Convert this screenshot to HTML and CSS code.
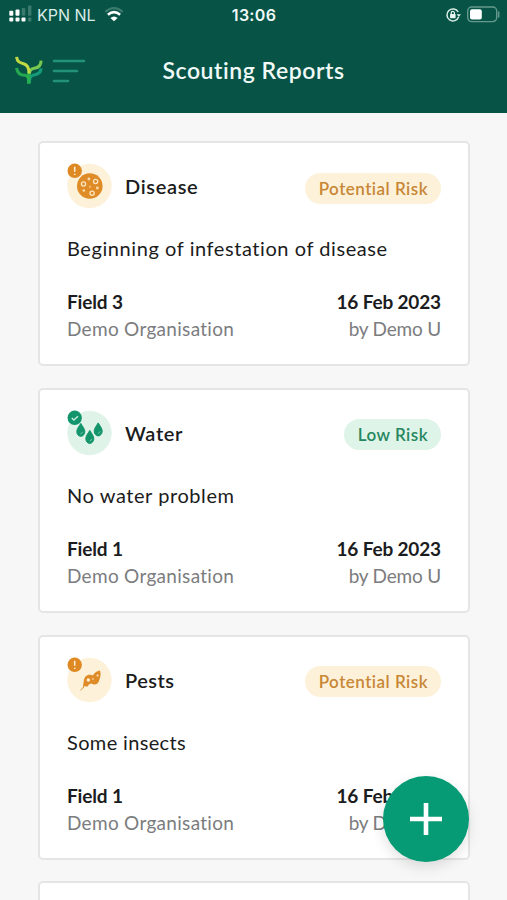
FILE: index.html
```html
<!DOCTYPE html>
<html lang="en">
<head>
<meta charset="utf-8">
<meta name="viewport" content="width=device-width, initial-scale=1">
<title>Scouting Reports</title>
<link rel="stylesheet" href="styles.css">
</head>
<body>
<header class="header">
  <div class="status">
    <div class="carrier">
      <svg class="signal" width="24" height="18" viewBox="0 0 24 18">
        <g fill="#fff"><rect x="0.3" y="5.8" width="4" height="5" rx="1"/><rect x="6.5" y="4.5" width="4" height="6.3" rx="1"/><rect x="0.3" y="12.6" width="4" height="4" rx="1"/><rect x="6.5" y="12.6" width="4" height="4" rx="1"/><rect x="12.5" y="12.6" width="4" height="4" rx="1"/></g>
        <g fill="#3b7a6d"><rect x="12.7" y="3" width="3.6" height="7.8" rx="1"/><rect x="19" y="0.5" width="3.4" height="10.3" rx="1"/><rect x="19" y="12.6" width="3.4" height="4" rx="1"/></g>
      </svg>
      <span class="carrier-name">KPN NL</span>
      <svg class="wifi" width="20" height="15" viewBox="0 0 20 15" fill="none">
        <path d="M1.3 4.8Q10-2.4 18.7 4.8" stroke="#3b7a6d" stroke-width="2.2"/>
        <path d="M3.9 7.8Q10 2.6 16.1 7.8" stroke="#fff" stroke-width="2.6"/>
        <path d="M6.4 10.9Q10 7.9 13.6 10.9L10 14.2Z" fill="#fff"/>
      </svg>
    </div>
    <span class="clock">13:06</span>
    <div class="power">
      <svg width="16" height="16" viewBox="0 0 16 16" fill="none">
        <path d="M13.6 10A6 6 0 1 1 13.2 5" stroke="#d8eee7" stroke-width="1.5"/>
        <path d="M11.6 7.2H16L13.8 10Z" fill="#d8eee7"/>
        <rect x="5" y="7" width="5.6" height="4.2" rx=".6" fill="#e8f6f2"/>
        <path d="M6.2 7V6a1.6 1.6 0 0 1 3.2 0V7" stroke="#e8f6f2" stroke-width="1.2"/>
      </svg>
      <svg width="34" height="18" viewBox="0 0 34 18" fill="none">
        <rect x="1.7" y="1" width="29" height="14.6" rx="4" stroke="#65998d" stroke-width="1.4"/>
        <rect x="4" y="3.2" width="11.8" height="10.2" rx="2" fill="#fff"/>
        <path d="M32.7 6v5" stroke="#65998d" stroke-width="1.4" stroke-linecap="round"/>
      </svg>
    </div>
  </div>
  <div class="navbar">
    <div class="nav-left">
      <svg width="28" height="29" viewBox="0 0 28 29" fill="none" stroke-width="3" stroke-linecap="butt" stroke-linejoin="round">
        <path d="M1.6 11.8C2.2 17.3 6 19.3 10 19.3C12.8 19.4 13.8 22 13.8 27" stroke="#25a950"/>
        <path d="M14.2 27C14.3 21 16 19.2 19 18.9C23 18.5 25.8 17 26.1 12.4" stroke="#159b78"/>
        <path d="M13.8 27.8V16" stroke="#25af50" stroke-width="3.4"/>
        <path d="M26.1 4.6C26 10.2 23 11.8 19.3 12.2C16.2 12.6 14.5 14.6 14.3 18" stroke="#78c850"/>
        <path d="M1.6 .8C2 6 5.2 6.8 8.6 7.7C12.5 8.8 14 11.8 14 17" stroke="#c1d944"/>
      </svg>
      <svg width="34" height="26" viewBox="0 0 34 26" fill="none" stroke="#22927a" stroke-width="2.6" stroke-linecap="round">
        <path d="M2 3H32M2 13H25M2 23H16"/>
      </svg>
    </div>
    <h1 class="title">Scouting Reports</h1>
  </div>
</header>

<main class="reports">
  <article class="card">
    <div class="card-head">
      <svg class="icon" width="46" height="46" viewBox="0 0 46 46">
        <circle cx="23.5" cy="23" r="22.2" fill="#fdf1d9"/>
        <circle cx="23.8" cy="23" r="12.8" fill="#df8b27"/>
        <g fill="none" stroke="#fbe6c3" stroke-width="1.3"><circle cx="17.5" cy="21" r="2.1"/><circle cx="29.6" cy="18.5" r="2.1"/><circle cx="26.1" cy="30.3" r="2.1"/></g>
        <g fill="#f9dcae"><circle cx="22.9" cy="16" r="1.4"/><circle cx="31.4" cy="25" r="1.4"/><circle cx="17.8" cy="27.5" r="1.3"/></g>
        <circle cx="24" cy="23.8" r="1.3" fill="#f5b25d"/>
        <circle cx="8.7" cy="7.8" r="7.2" fill="#df8925"/>
        <path d="M8.7 3.8V8.7M8.7 10.7V12" stroke="#fff2d9" stroke-width="1.5"/>
      </svg>
      <h2 class="kind">Disease</h2>
      <span class="risk risk-potential">Potential Risk</span>
    </div>
    <p class="summary summary-disease">Beginning of infestation of disease</p>
    <div class="meta"><strong class="field">Field 3</strong><strong class="date">16 Feb 2023</strong></div>
    <div class="meta meta-muted"><span class="org">Demo Organisation</span><span class="author">by Demo U</span></div>
  </article>

  <article class="card">
    <div class="card-head">
      <svg class="icon" width="46" height="46" viewBox="0 0 46 46">
        <circle cx="23.5" cy="23" r="22.2" fill="#e0f3e9"/>
        <g transform="translate(-1 -.6)">
          <g fill="#13946b" stroke="#13946b" stroke-width="1" stroke-linejoin="round">
            <path d="M15.8 14C17.8 17.4 19.8 19.5 19.8 22.2A3.9 4.6 0 0 1 11.8 22.2C11.8 19.5 13.8 17.4 15.8 14Z"/>
            <path d="M24.8 21C26.8 24.4 28.8 26.5 28.8 29.2A3.9 4.7 0 0 1 20.8 29.2C20.8 26.5 22.8 24.4 24.8 21Z"/>
            <path d="M33.2 13.5C35.2 16.9 37.2 19 37.2 21.7A3.9 4.7 0 0 1 29.2 21.7C29.2 19 31.2 16.9 33.2 13.5Z"/>
          </g>
          <g fill="none" stroke="#76c3a7" stroke-width=".9"><path d="M15.3 24.5Q17.3 24.2 17.6 22.4"/><path d="M24.5 31.6Q26.5 31.3 26.8 29.5"/><path d="M32.9 24Q34.9 23.7 35.2 21.9"/></g>
        </g>
        <circle cx="8.7" cy="7.8" r="7.2" fill="#13946b"/>
        <path d="M5.8 8L7.9 10L12 6.3" fill="none" stroke="#c6eddb" stroke-width="1.4"/>
      </svg>
      <h2 class="kind">Water</h2>
      <span class="risk risk-low">Low Risk</span>
    </div>
    <p class="summary summary-water">No water problem</p>
    <div class="meta"><strong class="field">Field 1</strong><strong class="date">16 Feb 2023</strong></div>
    <div class="meta meta-muted"><span class="org">Demo Organisation</span><span class="author">by Demo U</span></div>
  </article>

  <article class="card">
    <div class="card-head">
      <svg class="icon" width="46" height="46" viewBox="0 0 46 46">
        <circle cx="23.5" cy="23" r="22.2" fill="#fdf1d9"/>
        <path d="M16.8 31.8C17.5 29.5 16.9 27 17.8 24C18.3 20 20.5 17.5 24.5 17.8L27 18.6C28.8 15.2 30.8 14.4 34 13.6C35 16.5 34.6 19.5 33.5 22.5C32.5 25.8 31.2 27.8 27.8 27.6L25.2 26.4L22.8 27.6L21.8 29.4L18.4 29.2Z" fill="#df8b27"/>
        <path d="M17.5 30L14.6 33.4" fill="none" stroke="#df9b45" stroke-width="1"/>
        <g fill="#fff0d5"><circle cx="22.3" cy="23" r="1.7"/><circle cx="26.9" cy="22" r=".8"/><circle cx="31.5" cy="18.6" r="1"/></g>
        <circle cx="8.7" cy="7.8" r="7.2" fill="#df8925"/>
        <path d="M8.7 3.8V8.7M8.7 10.7V12" stroke="#fff2d9" stroke-width="1.5"/>
      </svg>
      <h2 class="kind kind-pests">Pests</h2>
      <span class="risk risk-potential">Potential Risk</span>
    </div>
    <p class="summary summary-pests">Some insects</p>
    <div class="meta"><strong class="field">Field 1</strong><strong class="date">16 Feb 2023</strong></div>
    <div class="meta meta-muted"><span class="org">Demo Organisation</span><span class="author">by Demo U</span></div>
  </article>

  <article class="card"></article>
</main>

<button class="fab" aria-label="Add report">
  <svg width="32" height="32" viewBox="0 0 32 32" stroke="#fff" stroke-width="4.6"><path d="M0 16H32M16 0V32"/></svg>
</button>
</body>
</html>
```
FILE: styles.css
```css
* {
  box-sizing: border-box;
}

body {
  margin: 0;
  height: 900px;
  overflow: hidden;
  background: #f7f7f7;
  color: #1b1c20;
  font-family: Lato, "Noto Sans", sans-serif;
}

h1, h2, p {
  margin: 0;
}

svg {
  display: block;
  flex: none;
}

.header {
  height: 113px;
  background: #075447;
  color: #effaf7;
}

.status {
  height: 30px;
  display: grid;
  grid-template-columns: 1fr auto 1fr;
  align-items: center;
  padding: 0 7px 0 9px;
  font-family: Inter, sans-serif;
}

.carrier {
  display: flex;
  align-items: center;
}

.signal {
  margin-top: -3px;
}

.carrier-name {
  margin-left: 4px;
  font-size: 16px;
  line-height: 20px;
  color: #d9ece7;
  white-space: nowrap;
}

.wifi {
  margin-left: 8px;
  margin-top: -1px;
}

.clock {
  margin-left: -1px;
  font-size: 16px;
  line-height: 20px;
  font-weight: 600;
  letter-spacing: 0.3px;
}

.power {
  display: flex;
  align-items: center;
  justify-content: flex-end;
  gap: 5px;
}

.navbar {
  height: 79px;
  display: grid;
  grid-template-columns: 1fr auto 1fr;
  align-items: center;
  padding: 0 14px;
}

.nav-left {
  display: flex;
  align-items: center;
  gap: 10px;
  margin-top: 2px;
  margin-left: 1px;
}

.nav-left svg:last-child {
  margin-left: -1px;
}

.title {
  font-size: 23px;
  line-height: 30px;
  font-weight: 600;
  letter-spacing: 0.55px;
}

.reports {
  display: flex;
  flex-direction: column;
  gap: 21.8px;
  height: 787px;
  overflow: hidden;
  padding: 28px 37.5px 0 38px;
}

.card {
  flex: none;
  height: 225px;
  padding: 20px 26.5px 0 27px;
  background: #fff;
  border: 2px solid #e5e5e5;
  border-radius: 5px;
}

.card-head {
  display: flex;
  align-items: center;
  height: 46px;
}

.icon {
  margin-left: -1px;
}

.kind {
  margin-left: 13px;
  font-size: 20px;
  line-height: 26px;
  font-weight: 600;
  letter-spacing: 0.65px;
}

.kind-pests {
  letter-spacing: 0.5px;
}

.risk {
  margin-left: auto;
  margin-top: 4px;
  padding: 0 13px 0 14px;
  border-radius: 16px;
  font-size: 17px;
  line-height: 31px;
  font-weight: 600;
  letter-spacing: 0.48px;
}

.risk-potential {
  background: #fdf1d9;
  color: #c88736;
}

.risk-low {
  background: #dff4e8;
  color: #26875f;
}

.summary {
  margin-top: 25px;
  font-size: 20px;
  line-height: 28px;
  letter-spacing: 0.57px;
}

.summary-pests {
  letter-spacing: 0.35px;
}

.meta {
  display: flex;
  justify-content: space-between;
  margin-top: 26px;
  font-size: 19px;
  line-height: 27px;
}

.meta strong {
  font-weight: 700;
}

.meta-muted {
  margin-top: 0;
  color: #7b7c7e;
}

.field {
  letter-spacing: -0.15px;
}

.date {
  letter-spacing: -0.15px;
}

.org {
  letter-spacing: 0.3px;
}

.author {
  letter-spacing: -0.2px;
}

.fab {
  position: fixed;
  right: 38px;
  bottom: 38px;
  display: flex;
  align-items: center;
  justify-content: center;
  width: 86px;
  height: 86px;
  padding: 0;
  border: 0;
  border-radius: 50%;
  background: #069b74;
  box-shadow: 0 5px 14px rgba(0, 0, 0, 0.12);
}
```
